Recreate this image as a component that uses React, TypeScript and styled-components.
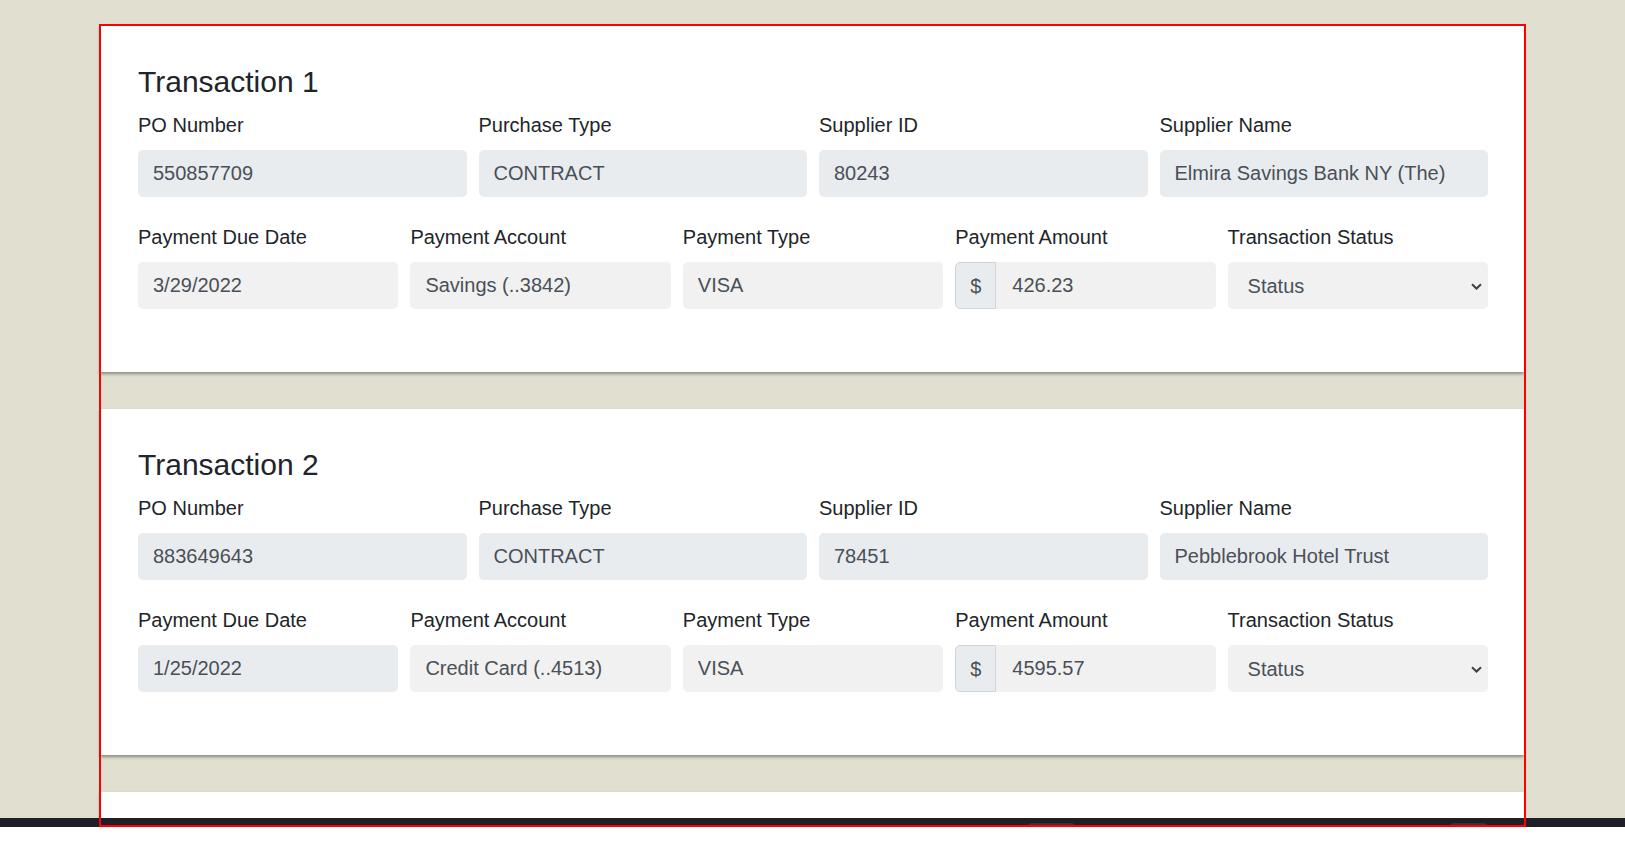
import React from "react";
import styled, { createGlobalStyle } from "styled-components";

const GlobalStyle = createGlobalStyle`
  html, body {
    margin: 0;
    padding: 0;
    background: #ffffff;
  }
  body {
    font-family: "Liberation Sans", Arial, sans-serif;
    color: #212529;
  }
  *, *::before, *::after { box-sizing: border-box; }
`;

const Screen = styled.div`
  position: relative;
  width: 1625px;
  height: 852px;
  display: flex;
  flex-direction: column;
  overflow: hidden;
`;

const Viewport = styled.div`
  height: 818px;
  flex: none;
  overflow: hidden;
  background: #e1dfcf;
  padding: 26px 0 0 100px;
`;

const Container = styled.div`
  width: 1424px;
  display: flex;
  flex-direction: column;
  gap: 37px;
`;

const Card = styled.section<{ $blank?: boolean }>`
  background: #ffffff;
  padding: 38px 36px 38px 38px;
  box-shadow: 0 2px 3px rgba(0, 0, 0, 0.38);
  min-height: ${(p) => (p.$blank ? "346px" : "auto")};
`;

const Title = styled.h4`
  margin: 0 0 10px;
  font-size: 30px;
  line-height: 36px;
  font-weight: 400;
  color: #212529;
`;

const Row = styled.div<{ $cols: number }>`
  display: grid;
  grid-template-columns: repeat(${(p) => p.$cols}, minmax(0, 1fr));
  column-gap: 12px;
  margin-bottom: 25px;
`;

const Field = styled.div`
  display: flex;
  flex-direction: column;
  min-width: 0;
`;

const Label = styled.label`
  display: block;
  font-size: 20px;
  line-height: 30px;
  margin-bottom: 10px;
  color: #212529;
`;

const Input = styled.input<{ $tone: "locked" | "soft"; $joined?: boolean }>`
  display: block;
  width: 100%;
  min-width: 0;
  height: 47px;
  padding: 7.5px ${(p) => (p.$joined ? "15px" : "14px")};
  font-family: "Liberation Sans", Arial, sans-serif;
  font-size: 20px;
  line-height: 30px;
  color: #495057;
  background: ${(p) => (p.$tone === "locked" ? "#e9ecef" : "#f1f1f1")};
  border: 1px solid transparent;
  border-radius: ${(p) => (p.$joined ? "0 5px 5px 0" : "5px")};
  outline: none;
`;

const InputGroup = styled.div`
  display: flex;
  align-items: stretch;
  height: 47px;
`;

const Addon = styled.span`
  display: flex;
  align-items: center;
  flex: none;
  padding: 0 14px;
  font-size: 20px;
  line-height: 30px;
  color: #495057;
  background: #e9ecef;
  border: 1px solid #ced4da;
  border-radius: 5px 0 0 5px;
`;

const SelectWrap = styled.div`
  position: relative;
  height: 47px;
`;

const Select = styled.select`
  appearance: none;
  -webkit-appearance: none;
  display: block;
  width: 100%;
  height: 47px;
  padding: 7.5px 30px 7.5px 19px;
  font-family: "Liberation Sans", Arial, sans-serif;
  font-size: 20px;
  line-height: 30px;
  color: #495057;
  background: #f1f1f1;
  border: 1px solid transparent;
  border-radius: 5px;
  outline: none;
`;

const Chevron = styled.svg`
  position: absolute;
  right: 6px;
  top: 50%;
  margin-top: -3px;
  width: 11px;
  height: 7px;
  pointer-events: none;
`;

const Taskbar = styled.div`
  height: 9px;
  flex: none;
  background: #1f1f27;
  display: flex;
  align-items: flex-end;
  padding-left: 1028px;
  gap: 375px;
`;

const TaskTab = styled.span<{ $w: number }>`
  width: ${(p) => p.$w}px;
  height: 4px;
  background: #34353d;
  border-radius: 4px 4px 0 0;
`;

const Below = styled.div`
  flex: 1;
  background: #ffffff;
`;

const Highlight = styled.div`
  position: absolute;
  left: 99px;
  top: 24px;
  width: 1427px;
  height: 803px;
  border: 2px solid #ff0000;
  pointer-events: none;
`;

type Tx = {
  po: string;
  purchaseType: string;
  supplierId: string;
  supplierName: string;
  dueDate: string;
  dueTone: "locked" | "soft";
  account: string;
  payType: string;
  amount: string;
};

const transactions: Tx[] = [
  {
    po: "550857709",
    purchaseType: "CONTRACT",
    supplierId: "80243",
    supplierName: "Elmira Savings Bank NY (The)",
    dueDate: "3/29/2022",
    dueTone: "soft",
    account: "Savings (..3842)",
    payType: "VISA",
    amount: "426.23",
  },
  {
    po: "883649643",
    purchaseType: "CONTRACT",
    supplierId: "78451",
    supplierName: "Pebblebrook Hotel Trust",
    dueDate: "1/25/2022",
    dueTone: "locked",
    account: "Credit Card (..4513)",
    payType: "VISA",
    amount: "4595.57",
  },
];

function TextField({ label, value, tone }: { label: string; value: string; tone: "locked" | "soft" }) {
  return (
    <Field>
      <Label>{label}</Label>
      <Input $tone={tone} readOnly value={value} />
    </Field>
  );
}

function TransactionCard({ tx, index }: { tx: Tx; index: number }) {
  return (
    <Card>
      <Title>Transaction {index}</Title>
      <Row $cols={4}>
        <TextField label="PO Number" value={tx.po} tone="locked" />
        <TextField label="Purchase Type" value={tx.purchaseType} tone="locked" />
        <TextField label="Supplier ID" value={tx.supplierId} tone="locked" />
        <TextField label="Supplier Name" value={tx.supplierName} tone="locked" />
      </Row>
      <Row $cols={5}>
        <TextField label="Payment Due Date" value={tx.dueDate} tone={tx.dueTone} />
        <TextField label="Payment Account" value={tx.account} tone="soft" />
        <TextField label="Payment Type" value={tx.payType} tone="soft" />
        <Field>
          <Label>Payment Amount</Label>
          <InputGroup>
            <Addon>$</Addon>
            <Input $tone="soft" $joined readOnly value={tx.amount} />
          </InputGroup>
        </Field>
        <Field>
          <Label>Transaction Status</Label>
          <SelectWrap>
            <Select defaultValue="">
              <option value="">Status</option>
              <option value="approved">Approved</option>
              <option value="pending">Pending</option>
              <option value="rejected">Rejected</option>
            </Select>
            <Chevron viewBox="0 0 11 7" aria-hidden="true">
              <path d="M1 1.2 5.5 5.5 10 1.2" fill="none" stroke="#3d4148" strokeWidth="2" />
            </Chevron>
          </SelectWrap>
        </Field>
      </Row>
    </Card>
  );
}

export default function App() {
  return (
    <>
      <GlobalStyle />
      <Screen>
        <Viewport>
          <Container>
            {transactions.map((tx, i) => (
              <TransactionCard key={tx.po} tx={tx} index={i + 1} />
            ))}
            <Card $blank aria-hidden="true" />
          </Container>
        </Viewport>
        <Taskbar>
          <TaskTab $w={47} />
          <TaskTab $w={37} />
        </Taskbar>
        <Below />
        <Highlight />
      </Screen>
    </>
  );
}
